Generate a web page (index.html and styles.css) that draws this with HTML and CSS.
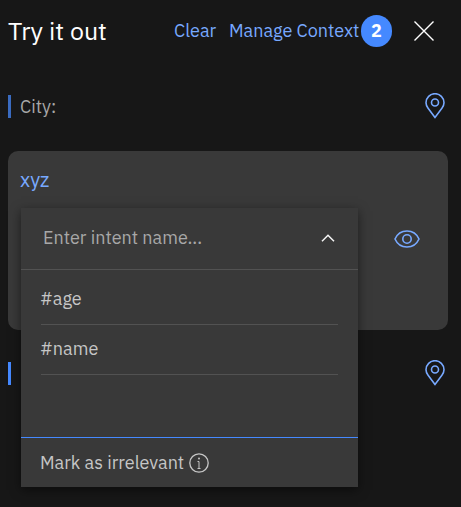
FILE: index.html
```html
<!DOCTYPE html>
<html lang="en">
<head>
<meta charset="utf-8">
<title>Try it out</title>
<link rel="stylesheet" href="styles.css">
</head>
<body>
<main class="panel">
  <header class="header">
    <h1 class="title">Try it out</h1>
    <a class="link clear">Clear</a>
    <a class="link manage">Manage Context</a>
    <span class="badge">2</span>
    <svg class="close" viewBox="0 0 20 20"><path d="M.5.5l19 19M19.5.5l-19 19"/></svg>
  </header>
  <section class="message">
    <span class="bar muted"></span>
    <span class="city">City:</span>
    <svg class="icon pin" viewBox="0 0 20 26"><path d="M10 24.4L3.1 15.2C1.7 13.4 1 11.6 1 9.7a9 9 0 0 1 18 0c0 1.9-.7 3.7-2.1 5.5z"/><circle cx="10" cy="9.5" r="3.5"/></svg>
  </section>
  <section class="card">
    <p class="utterance">xyz</p>
    <svg class="icon eye" viewBox="0 0 26 18"><path d="M1 9C3.200 4 7.800 1 13 1s9.800 3 12 8c-2.200 5-6.800 8-12 8S3.200 14 1 9z"/><circle cx="13" cy="9" r="4.200"/></svg>
    <div class="dropdown">
      <div class="field">
        <span class="placeholder">Enter intent name...</span>
        <svg class="chevron" viewBox="0 0 14 8"><path d="M1 7.200l6-6 6 6"/></svg>
      </div>
      <ul class="options">
        <li>#age</li>
        <li>#name</li>
      </ul>
      <div class="irrelevant">
        <span class="mark">Mark as irrelevant</span>
        <svg class="info" viewBox="0 0 20 20"><circle cx="10" cy="10" r="9.200"/><path class="stem" d="M8.500 8.500H10v6.500M8.500 15.500h3"/><circle class="dot" cx="10" cy="5.500" r="1"/></svg>
      </div>
    </div>
  </section>
  <section class="message">
    <span class="bar"></span>
    <svg class="icon pin" viewBox="0 0 20 26"><path d="M10 24.4L3.1 15.2C1.7 13.4 1 11.6 1 9.7a9 9 0 0 1 18 0c0 1.9-.7 3.7-2.1 5.5z"/><circle cx="10" cy="9.500" r="3.500"/></svg>
  </section>
</main>
</body>
</html>
```
FILE: styles.css
```css
* { box-sizing: border-box; }
body {
  margin: 0;
  background: #171717;
  color: #c6c6c6;
  font: 18px/24px "IBM Plex Sans", Roboto, sans-serif;
}
svg { display: block; flex: none; fill: none; }
.panel { height: 507px; padding: 0 13px 0 8px; overflow: hidden; }
.header { display: flex; align-items: center; height: 61px; white-space: nowrap; }
.title { width: 166px; margin: 0; font-size: 25px; font-weight: 400; line-height: 32px; color: #fff; }
.link { color: #78a9ff; }
.clear { width: 55px; }
.manage { width: 132px; }
.badge {
  width: 31px;
  height: 32px;
  border-radius: 16px;
  background: #4589ff;
  color: #fff;
  font-weight: 700;
  line-height: 31px;
  text-align: center;
}
.close { width: 20px; height: 20px; margin-left: 22px; stroke: #fff; stroke-width: 1.4; }
.message { display: flex; align-items: center; height: 90px; padding-right: 3px; }
.bar { width: 3px; height: 23px; margin-right: 9px; background: #4589ff; }
.bar.muted { background: #3a6bc0; }
.city { padding-top: 2px; color: #a8a8a8; }
.icon { stroke: #78a9ff; stroke-width: 1.6; }
.pin { width: 20px; height: 26px; margin-left: auto; }
.card {
  position: relative;
  height: 179px;
  padding: 17px 28px 0 12px;
  border-radius: 10px;
  background: #393939;
}
.card + .message { height: 86px; }
.utterance { margin: 0; color: #78a9ff; font-size: 20px; }
.eye { width: 26px; height: 18px; margin: 38px 0 0 auto; }
.dropdown {
  position: absolute;
  top: 57px;
  left: 13px;
  width: 337px;
  height: 279px;
  display: flex;
  flex-direction: column;
  background: #393939;
  box-shadow: 0 3px 10px rgba(0, 0, 0, .5);
}
.field {
  display: flex;
  align-items: center;
  justify-content: space-between;
  height: 62px;
  padding: 0 23px 0 22px;
  border-bottom: 1px solid #525252;
  color: #a8a8a8;
}
.placeholder { padding-bottom: 2px; }
.chevron { width: 14px; height: 8px; margin-bottom: 2px; stroke: #f4f4f4; stroke-width: 1.5; }
.options { flex: 1; margin: 0; padding: 5px 20px 0; list-style: none; }
.options li {
  display: flex;
  align-items: center;
  height: 50px;
  padding-bottom: 2px;
  border-bottom: 1px solid #525252;
  text-indent: -1px;
}
.irrelevant {
  display: flex;
  align-items: center;
  height: 50px;
  padding: 1px 20px 0 19px;
  border-top: 1px solid #4589ff;
}
.mark { width: 149px; white-space: nowrap; }
.info { width: 20px; height: 20px; stroke: #c6c6c6; stroke-width: 1.3; }
.stem { stroke-width: 1; }
.dot { fill: #c6c6c6; stroke: none; }
```
